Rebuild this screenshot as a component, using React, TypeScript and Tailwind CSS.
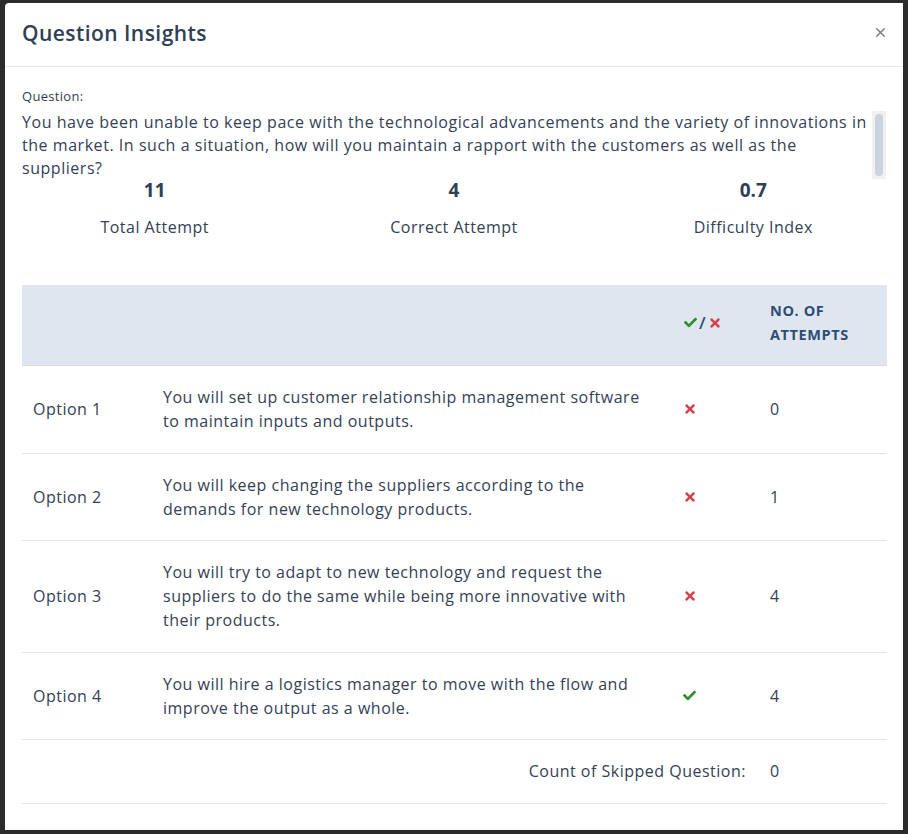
import { FaCheck, FaTimes } from "react-icons/fa";
import { X } from "lucide-react";

type Option = {
  label: string;
  lines: string[];
  correct: boolean;
  attempts: number;
};

const options: Option[] = [
  {
    label: "Option 1",
    lines: ["You will set up customer relationship management software", "to maintain inputs and outputs."],
    correct: false,
    attempts: 0,
  },
  {
    label: "Option 2",
    lines: ["You will keep changing the suppliers according to the", "demands for new technology products."],
    correct: false,
    attempts: 1,
  },
  {
    label: "Option 3",
    lines: [
      "You will try to adapt to new technology and request the",
      "suppliers to do the same while being more innovative with",
      "their products.",
    ],
    correct: false,
    attempts: 4,
  },
  {
    label: "Option 4",
    lines: ["You will hire a logistics manager to move with the flow and", "improve the output as a whole."],
    correct: true,
    attempts: 4,
  },
];

const stats = [
  { value: "11", label: "Total Attempt" },
  { value: "4", label: "Correct Attempt" },
  { value: "0.7", label: "Difficulty Index" },
];

const App = () => {
  return (
    <div className="w-[908px] h-[834px] bg-[#2b2b2b] pt-[3px] pl-[5px] pr-[5px] pb-[4px] font-['Open_Sans',sans-serif] text-[#344155]">
      <div className="bg-white h-full rounded-tl-[4px] overflow-hidden flex flex-col">
        {/* header */}
        <div className="h-[64px] shrink-0 flex items-center justify-between pl-[17px] pr-[15px] border-b border-[#e6e8eb]">
          <h2 className="text-[21px] font-semibold text-[#2f4055] tracking-[0.45px] -mt-[2px]">Question Insights</h2>
          <button className="text-[#7d7d7d] -mt-[4px]">
            <X size={15} strokeWidth={2.3} />
          </button>
        </div>

        {/* question */}
        <div className="px-[17px] pt-[20px]">
          <p className="text-[13px] leading-[18px] text-[#333d4a] tracking-[0.3px]">Question:</p>
          <div className="mt-[6px] h-[68px] flex gap-[1px]">
            <div className="flex-1 overflow-hidden">
              <p className="text-[16px] leading-[23px] tracking-[0.54px] whitespace-nowrap">
                You have been unable to keep pace with the technological advancements and the variety of innovations in
                <br />
                the market. In such a situation, how will you maintain a rapport with the customers as well as the
                <br />
                suppliers?
              </p>
            </div>
            <div className="w-[14px] bg-[#f1f1f1] px-[3px] pt-[3px] pb-[2px]">
              <div className="h-[62px] rounded-[5px] bg-[#cbd3dd]" />
            </div>
          </div>
        </div>

        {/* stats */}
        <div className="grid grid-cols-3 text-center mt-[1px]">
          {stats.map((s) => (
            <div key={s.label} className="flex flex-col items-center">
              <span className="text-[19px] leading-[20px] font-bold text-[#2f4055]">{s.value}</span>
              <span className="mt-[16px] text-[16px] leading-[22px] tracking-[0.5px]">{s.label}</span>
            </div>
          ))}
        </div>

        {/* table */}
        <div className="px-[17px] mt-[47px]">
          <table className="w-full table-fixed border-collapse text-[16px] leading-[24px] tracking-[0.5px]">
            <colgroup>
              <col className="w-[130px]" />
              <col className="w-[521px]" />
              <col className="w-[86px]" />
              <col className="w-[128px]" />
            </colgroup>
            <thead>
              <tr className="bg-[#dfe6f0] h-[80px] border-b border-[#d9dee5]">
                <th />
                <th />
                <th className="px-[11px] pt-[14px] pb-[18px] text-left align-middle">
                  <span className="inline-flex items-center gap-[2px] text-[#2c4d74]">
                    <FaCheck className="text-[#2b912b]" size={13} />
                    <span className="text-[17px] leading-[20px] font-semibold">/</span>
                    <FaTimes className="text-[#d6414d]" size={14} />
                  </span>
                </th>
                <th className="px-[11px] pt-[14px] pb-[18px] text-left text-[14.5px] leading-[24px] font-bold text-[#2c4d74] uppercase tracking-[0.6px]">
                  No. of
                  <br />
                  Attempts
                </th>
              </tr>
            </thead>
            <tbody>
              {options.map((o) => (
                <tr key={o.label} className="border-b border-[#e2e4e7]">
                  <td className="px-[11px] pt-[19px] pb-[19.5px] align-middle">{o.label}</td>
                  <td className="px-[11px] pt-[19px] pb-[19.5px] align-middle whitespace-nowrap">
                    {o.lines.map((l, i) => (
                      <span key={i} className="block">
                        {l}
                      </span>
                    ))}
                  </td>
                  <td className="pl-[10px] pr-[11px] pt-[19px] pb-[19.5px] align-middle">
                    {o.correct ? (
                      <FaCheck className="text-[#2b912b]" size={13} />
                    ) : (
                      <FaTimes className="text-[#d6414d]" size={14} />
                    )}
                  </td>
                  <td className="px-[11px] pt-[19px] pb-[19.5px] align-middle">{o.attempts}</td>
                </tr>
              ))}
              <tr className="border-b border-[#e2e4e7]">
                <td colSpan={3} className="px-[11px] pt-[19px] pb-[19.5px] pr-[13px] text-right whitespace-nowrap">
                  Count of Skipped Question:
                </td>
                <td className="px-[11px] pt-[19px] pb-[19.5px]">0</td>
              </tr>
            </tbody>
          </table>
        </div>
      </div>
    </div>
  );
};

export default App;
